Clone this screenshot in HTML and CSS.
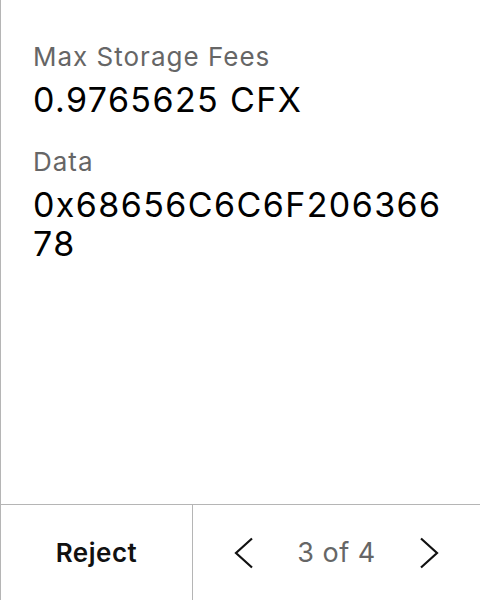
FILE: index.html
```html
<!DOCTYPE html>
<html>
<head>
<meta charset="utf-8">
<link rel="stylesheet" href="styles.css">
</head>
<body>
<div class="panel">
  <div class="content">
    <div class="field">
      <div class="label">Max Storage Fees</div>
      <div class="value">0.9765625 CFX</div>
    </div>
    <div class="field">
      <div class="label">Data</div>
      <div class="value">0x68656C6C6F20636678</div>
    </div>
  </div>
  <div class="footer">
    <div class="reject">Reject</div>
    <div class="pager">
      <svg class="chev" width="20" height="32" viewBox="0 0 20 32"><path d="M18 1.5 L2 16 L18 30.5" fill="none" stroke="#111" stroke-width="2.2"/></svg>
      <span class="count">3 of 4</span>
      <svg class="chev" width="20" height="32" viewBox="0 0 20 32"><path d="M2 1.5 L18 16 L2 30.5" fill="none" stroke="#111" stroke-width="2.2"/></svg>
    </div>
  </div>
</div>
</body>
</html>
```
FILE: styles.css
```css
html, body { margin: 0; padding: 0; background: #fff; }
body { font-family: Inter, "Noto Sans", sans-serif; }
.panel {
  width: 480px; height: 600px; box-sizing: border-box;
  border-left: 1px solid #b5b5b5;
  display: flex; flex-direction: column;
}
.content { flex: 1; padding: 41px 22px 0 32px; }
.field { margin-bottom: 27px; }
.label { font-size: 26px; line-height: 32px; letter-spacing: 1px; color: #666; }
.value { font-size: 34px; line-height: 39px; letter-spacing: 1.4px; color: #000; margin-top: 7px; word-break: break-all; }
.footer {
  height: 96px; box-sizing: border-box; border-top: 1px solid #b5b5b5;
  display: flex;
}
.reject {
  width: 191px; border-right: 1px solid #b5b5b5;
  display: flex; align-items: center; justify-content: center;
  font-size: 26px; font-weight: 600; letter-spacing: 0.5px; color: #111;
}
.pager { flex: 1; display: flex; align-items: center; justify-content: space-between; padding: 0 41px 0 41px; }
.count { font-size: 27px; letter-spacing: 0.5px; color: #666; }
.chev { display: block; }
```
